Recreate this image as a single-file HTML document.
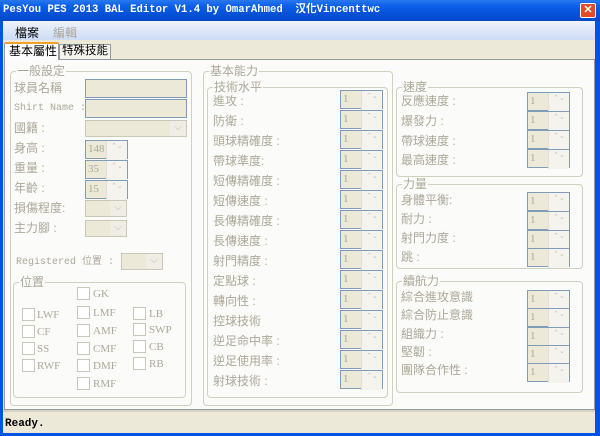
<!DOCTYPE html>
<html><head><meta charset="utf-8"><style>
*{box-sizing:border-box;margin:0;padding:0}
body{width:600px;height:436px;overflow:hidden;background:#0054e3;font-family:"Liberation Sans","Noto Sans CJK TC",sans-serif;font-size:12px;position:relative}
.a{position:absolute}
.t{position:absolute;color:#aca899;font-size:12px;line-height:14px;white-space:nowrap}
.m{font-family:"Liberation Mono","Noto Sans CJK TC",monospace;font-size:10px}
.g{position:absolute;border:1px solid #d0d0bf;border-radius:4px}
.gl{position:absolute;top:-8px;left:5px;background:#fbfbf9;color:#aca899;padding:0 1px;line-height:14px;white-space:nowrap}
.tb{position:absolute;background:#ece9d8;border:1px solid #7f9db9}
.cb{position:absolute;background:#ece9d8;border:1px solid #c9c7ba}
.cb:after{content:"⌵";position:absolute;right:0;top:0;width:16px;height:100%;background:#f0eee4;color:#c0bcaa;font-size:10px;text-align:center;line-height:14px}
.sp{position:absolute;width:43px;height:19px;background:#ece9d8;border:1px solid #7f9db9;color:#aca899;font-size:11px;line-height:16px;padding-left:2px;font-family:"Liberation Serif",serif}
.sp:after{content:"⌃⌄";position:absolute;right:0;top:0;width:14px;height:17px;background:#f4f3ee;border-left:1px solid #e2e0d4;color:#c4c2b4;font-size:7px;line-height:8px;text-align:center;word-break:break-all;padding:1px 3px}
.ck{position:absolute;width:13px;height:13px;border:1px solid #c9c7ba;background:#fff}
.cl{position:absolute;color:#aca899;font-family:"Liberation Serif",serif;font-size:11px;line-height:13px}
</style></head><body>
<!-- title -->
<div class="a" style="left:0;top:0;width:600px;height:21px;background:linear-gradient(#2a78f0,#0a5fe8 30%,#0450d6 70%,#0347c8)"></div>
<div class="a" style="left:3px;top:4px;color:#fff;font-family:'Liberation Mono','Noto Sans CJK TC',monospace;font-weight:bold;font-size:10.6px;line-height:13px;white-space:nowrap">PesYou PES 2013 BAL Editor V1.4 by OmarAhmed&nbsp; 汉化Vincenttwc</div>
<div class="a" style="left:580px;top:3px;width:16px;height:15px;background:#e24b25;border:1px solid #fff;border-radius:2px;color:#fff;font-size:11px;font-weight:bold;text-align:center;line-height:13px">✕</div>
<!-- body -->
<div class="a" style="left:3px;top:21px;width:592px;height:412px;background:#ece9d8"></div>
<div class="a" style="left:3px;top:21px;width:592px;height:19px;background:linear-gradient(#eef3fc,#cddcf5)"></div>
<div class="a" style="left:15px;top:24px;color:#000;font-size:12px">檔案</div>
<div class="a" style="left:53px;top:24px;color:#aca899;font-size:12px">編輯</div>
<!-- tabs -->
<div class="a" style="left:4px;top:42px;width:55px;height:18px;background:#fcfcfe;border:1px solid #919b9c;border-bottom:none;border-top:2px solid #f1a22b;border-radius:2px 2px 0 0;z-index:2;padding-left:4px;line-height:14px;font-size:12px">基本屬性</div>
<div class="a" style="left:59px;top:44px;width:52px;height:15px;background:#f4f3ee;border:1px solid #919b9c;border-bottom:none;padding-left:2px;line-height:13px;font-size:11.5px;white-space:nowrap">特殊技能</div>
<div class="a" style="left:4px;top:59px;width:591px;height:351px;background:#fbfbf9;border:1px solid #919b9c"></div>
<!-- status -->
<div class="a" style="left:3px;top:410px;width:592px;height:23px;background:#ece9d8;border-top:2px solid #d6d2c2"></div>
<div class="a m" style="left:5px;top:418px;color:#000;font-weight:bold;font-size:11px">Ready.</div>

<!-- 一般設定 -->
<div class="g" style="left:10px;top:71px;width:182px;height:335px"><div class="gl">一般設定</div></div>
<div class="t" style="left:14px;top:81px">球員名稱</div>
<div class="tb" style="left:85px;top:79px;width:102px;height:19px"></div>
<div class="t m" style="left:14px;top:102px">Shirt Name :</div>
<div class="tb" style="left:85px;top:99px;width:102px;height:19px"></div>
<div class="t" style="left:14px;top:121px">國籍 :</div>
<div class="cb" style="left:85px;top:120px;width:102px;height:17px"></div>
<div class="t" style="left:14px;top:141px">身高 :</div>
<div class="sp" style="left:85px;top:140px">148</div>
<div class="t" style="left:14px;top:161px">重量 :</div>
<div class="sp" style="left:85px;top:160px">35</div>
<div class="t" style="left:14px;top:181px">年齡 :</div>
<div class="sp" style="left:85px;top:180px">15</div>
<div class="t" style="left:14px;top:201px">損傷程度:</div>
<div class="cb" style="left:85px;top:200px;width:42px;height:17px"></div>
<div class="t" style="left:14px;top:221px">主力腳 :</div>
<div class="cb" style="left:85px;top:220px;width:42px;height:17px"></div>
<div class="t m" style="left:16px;top:256px">Registered 位置 :</div>
<div class="cb" style="left:121px;top:253px;width:42px;height:17px"></div>
<div class="g" style="left:13px;top:282px;width:173px;height:116px"><div class="gl">位置</div></div>
<div class="ck" style="left:77px;top:287px"></div><div class="cl" style="left:93px;top:288px">GK</div>
<div class="ck" style="left:22px;top:308px"></div><div class="cl" style="left:37px;top:309px">LWF</div>
<div class="ck" style="left:77px;top:306px"></div><div class="cl" style="left:93px;top:307px">LMF</div>
<div class="ck" style="left:133px;top:307px"></div><div class="cl" style="left:149px;top:308px">LB</div>
<div class="ck" style="left:22px;top:325px"></div><div class="cl" style="left:37px;top:326px">CF</div>
<div class="ck" style="left:77px;top:324px"></div><div class="cl" style="left:93px;top:325px">AMF</div>
<div class="ck" style="left:133px;top:323px"></div><div class="cl" style="left:149px;top:324px">SWP</div>
<div class="ck" style="left:22px;top:342px"></div><div class="cl" style="left:37px;top:343px">SS</div>
<div class="ck" style="left:77px;top:342px"></div><div class="cl" style="left:93px;top:343px">CMF</div>
<div class="ck" style="left:133px;top:340px"></div><div class="cl" style="left:149px;top:341px">CB</div>
<div class="ck" style="left:22px;top:359px"></div><div class="cl" style="left:37px;top:360px">RWF</div>
<div class="ck" style="left:77px;top:359px"></div><div class="cl" style="left:93px;top:360px">DMF</div>
<div class="ck" style="left:133px;top:357px"></div><div class="cl" style="left:149px;top:358px">RB</div>
<div class="ck" style="left:77px;top:377px"></div><div class="cl" style="left:93px;top:378px">RMF</div>

<!-- 基本能力 -->
<div class="g" style="left:203px;top:71px;width:190px;height:335px"><div class="gl">基本能力</div></div>
<div class="g" style="left:207px;top:87px;width:181px;height:311px"><div class="gl">技術水平</div></div>
<div class="t" style="left:213px;top:94px">進攻 :</div><div class="sp" style="left:340px;top:90px">1</div>
<div class="t" style="left:213px;top:114px">防衛 :</div><div class="sp" style="left:340px;top:110px">1</div>
<div class="t" style="left:213px;top:134px">頭球精確度 :</div><div class="sp" style="left:340px;top:130px">1</div>
<div class="t" style="left:213px;top:154px">帶球準度:</div><div class="sp" style="left:340px;top:150px">1</div>
<div class="t" style="left:213px;top:174px">短傳精確度 :</div><div class="sp" style="left:340px;top:170px">1</div>
<div class="t" style="left:213px;top:194px">短傳速度 :</div><div class="sp" style="left:340px;top:190px">1</div>
<div class="t" style="left:213px;top:214px">長傳精確度 :</div><div class="sp" style="left:340px;top:210px">1</div>
<div class="t" style="left:213px;top:234px">長傳速度 :</div><div class="sp" style="left:340px;top:230px">1</div>
<div class="t" style="left:213px;top:254px">射門精度 :</div><div class="sp" style="left:340px;top:250px">1</div>
<div class="t" style="left:213px;top:274px">定點球 :</div><div class="sp" style="left:340px;top:270px">1</div>
<div class="t" style="left:213px;top:294px">轉向性 :</div><div class="sp" style="left:340px;top:290px">1</div>
<div class="t" style="left:213px;top:314px">控球技術</div><div class="sp" style="left:340px;top:310px">1</div>
<div class="t" style="left:213px;top:334px">逆足命中率 :</div><div class="sp" style="left:340px;top:330px">1</div>
<div class="t" style="left:213px;top:354px">逆足使用率 :</div><div class="sp" style="left:340px;top:350px">1</div>
<div class="t" style="left:213px;top:374px">射球技術 :</div><div class="sp" style="left:340px;top:370px">1</div>

<!-- 速度 -->
<div class="g" style="left:396px;top:87px;width:187px;height:90px"><div class="gl">速度</div></div>
<div class="t" style="left:401px;top:94px">反應速度 :</div><div class="sp" style="left:527px;top:92px">1</div>
<div class="t" style="left:401px;top:114px">爆發力 :</div><div class="sp" style="left:527px;top:111px">1</div>
<div class="t" style="left:401px;top:134px">帶球速度 :</div><div class="sp" style="left:527px;top:130px">1</div>
<div class="t" style="left:401px;top:153px">最高速度 :</div><div class="sp" style="left:527px;top:149px">1</div>
<!-- 力量 -->
<div class="g" style="left:396px;top:184px;width:187px;height:85px"><div class="gl">力量</div></div>
<div class="t" style="left:401px;top:193px">身體平衡:</div><div class="sp" style="left:527px;top:192px">1</div>
<div class="t" style="left:401px;top:212px">耐力 :</div><div class="sp" style="left:527px;top:211px">1</div>
<div class="t" style="left:401px;top:231px">射門力度 :</div><div class="sp" style="left:527px;top:230px">1</div>
<div class="t" style="left:401px;top:250px">跳 :</div><div class="sp" style="left:527px;top:248px">1</div>
<!-- 體能力 -->
<div class="g" style="left:396px;top:281px;width:187px;height:112px"><div class="gl">續航力</div></div>
<div class="t" style="left:401px;top:290px">綜合進攻意識</div><div class="sp" style="left:527px;top:290px">1</div>
<div class="t" style="left:401px;top:308px">綜合防止意識</div><div class="sp" style="left:527px;top:308px">1</div>
<div class="t" style="left:401px;top:327px">組織力 :</div><div class="sp" style="left:527px;top:327px">1</div>
<div class="t" style="left:401px;top:345px">堅韌 :</div><div class="sp" style="left:527px;top:345px">1</div>
<div class="t" style="left:401px;top:363px">團隊合作性 :</div><div class="sp" style="left:527px;top:363px">1</div>
</body></html>
